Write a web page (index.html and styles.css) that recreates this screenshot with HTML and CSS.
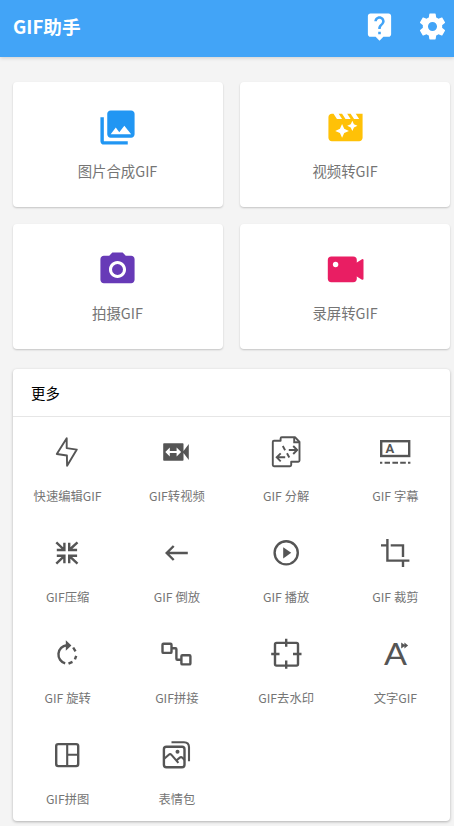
FILE: index.html
```html
<!DOCTYPE html>
<html lang="zh-CN">
<head>
<meta charset="utf-8">
<title>GIF助手</title>
<link rel="stylesheet" href="styles.css">
</head>
<body>
<header class="bar">
  <h1>GIF助手</h1>
  <div class="actions">
    <svg viewBox="0 0 24 24"><path d="M19 2H5c-1.11 0-2 .9-2 2v14c0 1.1.89 2 2 2h4l3 3 3-3h4c1.1 0 2-.9 2-2V4c0-1.1-.9-2-2-2zm-6 16h-2v-2h2v2zm2.07-7.75l-.9.92C13.45 11.9 13 12.5 13 14h-2v-.5c0-1.1.45-2.1 1.17-2.83l1.24-1.26c.37-.36.59-.86.59-1.41 0-1.1-.9-2-2-2s-2 .9-2 2H8c0-2.21 1.79-4 4-4s4 1.79 4 4c0 .88-.36 1.68-.93 2.25z"/></svg>
    <svg viewBox="0 0 24 24"><path d="M19.43 12.98c.04-.32.07-.64.07-.98s-.03-.66-.07-.98l2.11-1.65c.19-.15.24-.42.12-.64l-2-3.46c-.12-.22-.39-.3-.61-.22l-2.49 1c-.52-.4-1.08-.73-1.69-.98l-.38-2.65C14.46 2.18 14.25 2 14 2h-4c-.25 0-.46.18-.49.42l-.38 2.65c-.61.25-1.17.59-1.69.98l-2.49-1c-.23-.09-.49 0-.61.22l-2 3.46c-.13.22-.07.49.12.64l2.11 1.65c-.04.32-.07.65-.07.98s.03.66.07.98l-2.11 1.65c-.19.15-.24.42-.12.64l2 3.46c.12.22.39.3.61.22l2.49-1c.52.4 1.08.73 1.69.98l.38 2.65c.03.24.24.42.49.42h4c.25 0 .46-.18.49-.42l.38-2.65c.61-.25 1.17-.59 1.69-.98l2.49 1c.23.09.49 0 .61-.22l2-3.46c.12-.22.07-.49-.12-.64l-2.11-1.65zM12 15.5c-1.93 0-3.5-1.57-3.5-3.5s1.57-3.5 3.5-3.5 3.5 1.57 3.5 3.5-1.57 3.5-3.5 3.5z"/></svg>
  </div>
</header>
<main>
  <section class="cards">
    <div class="card blue">
      <svg viewBox="0 0 24 24"><path d="M22 16V4c0-1.1-.9-2-2-2H8c-1.1 0-2 .9-2 2v12c0 1.1.9 2 2 2h12c1.1 0 2-.9 2-2zm-11-4l2.03 2.71L16 11l4 5H8l3-4zM2 6v14c0 1.1.9 2 2 2h14v-2H4V6H2z"/></svg>
      <span>图片合成GIF</span>
    </div>
    <div class="card amber">
      <svg viewBox="0 0 24 24"><path d="M18 4l2 3h-3l-2-3h-2l2 3h-3l-2-3H8l2 3H7L5 4H4c-1.1 0-1.99.9-1.99 2L2 18c0 1.1.9 2 2 2h16c1.1 0 2-.9 2-2V4h-4zm-6.75 11.25L10 18l-1.25-2.75L6 14l2.75-1.25L10 10l1.25 2.75L14 14l-2.75 1.25zm5.69-3.31L16 14l-.94-2.06L13 11l2.06-.94L16 8l.94 2.06L19 11l-2.06.94z"/></svg>
      <span>视频转GIF</span>
    </div>
    <div class="card purple">
      <svg viewBox="0 0 24 24"><circle cx="12" cy="12" r="3.2"/><path d="M9 2L7.17 4H4c-1.1 0-2 .9-2 2v12c0 1.1.9 2 2 2h16c1.1 0 2-.9 2-2V6c0-1.1-.9-2-2-2h-3.17L15 2H9zm3 15c-2.76 0-5-2.24-5-5s2.24-5 5-5 5 2.24 5 5-2.24 5-5 5z"/></svg>
      <span>拍摄GIF</span>
    </div>
    <div class="card pink">
      <svg viewBox="0 0 41 41"><rect x="2.8" y="7.5" width="29" height="25.7" rx="3.6"/><path d="M31 14l6-3.8q1.5-.5 1.5 1v18.5q0 1.5-1.5 1l-6-3.8z"/><circle class="hole" cx="10.6" cy="15.5" r="2.7"/></svg>
      <span>录屏转GIF</span>
    </div>
  </section>
  <section class="more">
    <h2>更多</h2>
    <div class="tools">
      <div class="tool"><svg viewBox="0 0 36 36"><path class="w19" stroke-linejoin="round" d="M17.700 4.200L7.800 20l10.100 1.500.2 10.300L27.800 15.600l-10.100-1.500z"/></svg><span>快速编辑GIF</span></div>
      <div class="tool"><svg viewBox="0 0 36 36"><path class="solid" d="M6 9.300h18.700q.8 0 .8.800v7l5.300-7v15.800l-5.300-7v7q0 .8-.8.800H6q-.8 0-.8-.8V10.100q0-.8.8-.8z"/><path class="paper" d="M7.300 18l4.500-4.400V17h6.800v-3.400l4.500 4.400-4.500 4.400V19h-6.800v3.400z"/></svg><span>GIF转视频</span></div>
      <div class="tool"><svg viewBox="0 0 36 36"><g class="w19"><path stroke-linejoin="round" d="M6 6.700h6.600V4.500q0-1.200 1.200-1.200h13.400l4.300 4.700v18.500q0 1.200-1.200 1.200h-7.100v3.400q0 1.200-1.200 1.200H6q-1.200 0-1.200-1.200V7.900Q4.800 6.700 6 6.700z"/><path d="M26.200 3.500v4.700h5.200M14.800 12l2.300 4.200M19 19.300l2.300 4.200M20.800 16h8M25.200 12l4 4-4 4M17.200 23.300h-8M12.700 19.300l-4 4 4 4"/></g></svg><span>GIF 分解</span></div>
      <div class="tool"><svg viewBox="0 0 36 36"><rect class="w24" x="4.200" y="7.200" width="28" height="14.800"/><text class="mark" x="12.900" y="19.200" font-size="13">A</text><path d="M3 28.700h2.300M7.600 28.700h5.400M15.400 28.700H21M23.200 28.700h5.600M31 28.700h2.400"/></svg><span>GIF 字幕</span></div>
      <div class="tool"><svg viewBox="0 0 36 36"><path class="w24" d="M15.400 7.700v7.300H7.800M7.300 7.300l8.100 7.700M20.200 7.700v7.300h7.900M28.500 7.300l-8.300 7.700M15.400 28.300v-7.500H7.800M7.300 28.600l8.100-7.800M20.200 28.300v-7.500h7.900M28.500 28.600l-8.300-7.800"/></svg><span>GIF压缩</span></div>
      <div class="tool"><svg viewBox="0 0 36 36"><path class="w24" d="M29.800 18H8.500M15.700 11l-7 7 7 7"/></svg><span>GIF 倒放</span></div>
      <div class="tool"><svg viewBox="0 0 36 36"><circle class="w24" cx="18.200" cy="17.800" r="11.600"/><path class="solid" d="M15.200 12.200l8 5.600-8 5.600z"/></svg><span>GIF 播放</span></div>
      <div class="tool"><svg viewBox="0 0 36 36"><path class="w24" d="M4 10.400h6.400M10.400 4v21.600h22M13.700 10.400H26V22M26 25.600V32"/></svg><span>GIF 裁剪</span></div>
      <div class="tool"><svg viewBox="0 0 36 36"><path d="M16.200 27.400A9.300 9.300 0 0 1 17.800 9.200M24.200 11.500l2.300 3.800M27.200 19.800l-1.300 3.600M23.500 25.800l-4 1.800" class="w24"/><path class="solid" d="M16.800 4.200l5.600 5.300-5.600 5.300z"/></svg><span>GIF 旋转</span></div>
      <div class="tool"><svg viewBox="0 0 36 36"><g class="w24"><rect x="4.500" y="7.700" width="9" height="9.200" rx="1"/><rect x="23.400" y="19.200" width="9" height="9.200" rx="1"/><path d="M13.700 12.300h3.700q1 0 1 1v9.400q0 1 1 1h3.800"/></g></svg><span>GIF拼接</span></div>
      <div class="tool"><svg viewBox="0 0 36 36"><rect class="w24" x="7" y="6.900" width="23" height="22.700" rx="1.500"/><path class="w24" d="M18.200 2.700v8M18.200 24.500v8.200M3.200 18h8.300M25 18h8.500"/></svg><span>GIF去水印</span></div>
      <div class="tool"><svg viewBox="0 0 36 36"><text class="letter" x="7" y="29.200" font-size="31.500" textLength="23" lengthAdjust="spacingAndGlyphs">A</text><path class="solid" d="M24.200 6.500l3.200 2.300V6.500l3.700 3-3.700 3v-2.300l-3.200 2.300z"/></svg><span>文字GIF</span></div>
      <div class="tool"><svg viewBox="0 0 36 36"><rect class="w24" x="7.200" y="7.100" width="22" height="22" rx="2"/><path d="M18.200 7v22M18.200 17.800h11"/></svg><span>GIF拼图</span></div>
      <div class="tool"><svg viewBox="0 0 36 36"><rect class="w24" x="5.900" y="9.700" width="20.600" height="20.500" rx="2.500"/><path d="M13.500 5.300h12.500q5 0 5 5v14M6.200 21.700l4.600-4q1.400-1.200 2.700.2l6.900 8M18 23.800l3.800-3.200q1.200-1 2.400 0l2.400 2.400"/><circle class="solid" cx="19.500" cy="14.700" r="2"/></svg><span>表情包</span></div>
    </div>
  </section>
</main>
</body>
</html>
```
FILE: styles.css
```css
* {
  box-sizing: border-box;
}

body {
  margin: 0;
  height: 826px;
  overflow: hidden;
  background: #f4f4f4;
  font-family: "Noto Sans CJK SC", sans-serif;
}

.bar {
  height: 57px;
  padding: 0 6px 5px 13px;
  display: flex;
  align-items: center;
  justify-content: space-between;
  background: #42a4f7;
  box-shadow: 0 1px 4px rgba(0, 0, 0, 0.16);
}

h1 {
  margin: 0;
  font-size: 18.6px;
  line-height: 26px;
  font-weight: 700;
  color: #fff;
}

.actions {
  display: flex;
  gap: 22.5px;
}

.actions svg {
  width: 31px;
  height: 31px;
  fill: #fff;
}

main {
  padding: 25px 4px 0 13px;
}

.cards {
  display: grid;
  grid-template-columns: 210px 210px;
  gap: 17px;
}

.card {
  height: 125px;
  padding-top: 25px;
  display: flex;
  flex-direction: column;
  align-items: center;
  gap: 12px;
  border-radius: 4px;
  background: #fff;
  box-shadow: 0 1px 2px rgba(0, 0, 0, 0.2);
}

.card svg {
  width: 41px;
  height: 41px;
  fill: currentColor;
}

.card .hole {
  fill: #fff;
}

.card span {
  font-size: 14.4px;
  line-height: 22px;
  color: #757575;
}

.blue {
  color: #2196f3;
}

.amber {
  color: #ffc107;
}

.purple {
  color: #673ab7;
}

.blue,
.purple {
  padding-right: 1px;
}

.pink {
  color: #e91e63;
}

.more {
  height: 452px;
  margin-top: 20px;
  border-radius: 4px;
  background: #fff;
  box-shadow: 0 1px 3px rgba(0, 0, 0, 0.28);
}

h2 {
  height: 48px;
  margin: 0;
  padding-left: 18px;
  border-bottom: 1px solid #e6e6e6;
  font-size: 14.4px;
  line-height: 47px;
  font-weight: 400;
  color: #000;
}

.tools {
  display: grid;
  grid-template-columns: repeat(4, 1fr);
  grid-auto-rows: 101px;
}

.tool {
  padding-top: 17px;
  display: flex;
  flex-direction: column;
  align-items: center;
  gap: 17px;
}

.tool svg {
  width: 36px;
  height: 36px;
  margin-right: 1px;
  overflow: visible;
  fill: none;
  stroke: #555;
  stroke-width: 2.1;
}

.tool span {
  font-size: 12.3px;
  line-height: 18px;
  color: #757575;
  white-space: nowrap;
}

.tool .w19 {
  stroke-width: 1.9;
}

.tool .w24 {
  stroke-width: 2.4;
}

.tool .solid {
  fill: #555;
  stroke: none;
}

.tool .paper {
  fill: #fff;
  stroke: none;
}

.mark,
.letter {
  fill: #555;
  stroke: none;
}

.mark {
  font-family: Roboto, sans-serif;
  font-weight: 700;
  text-anchor: middle;
}

.letter {
  font-family: Lato, sans-serif;
}
```
